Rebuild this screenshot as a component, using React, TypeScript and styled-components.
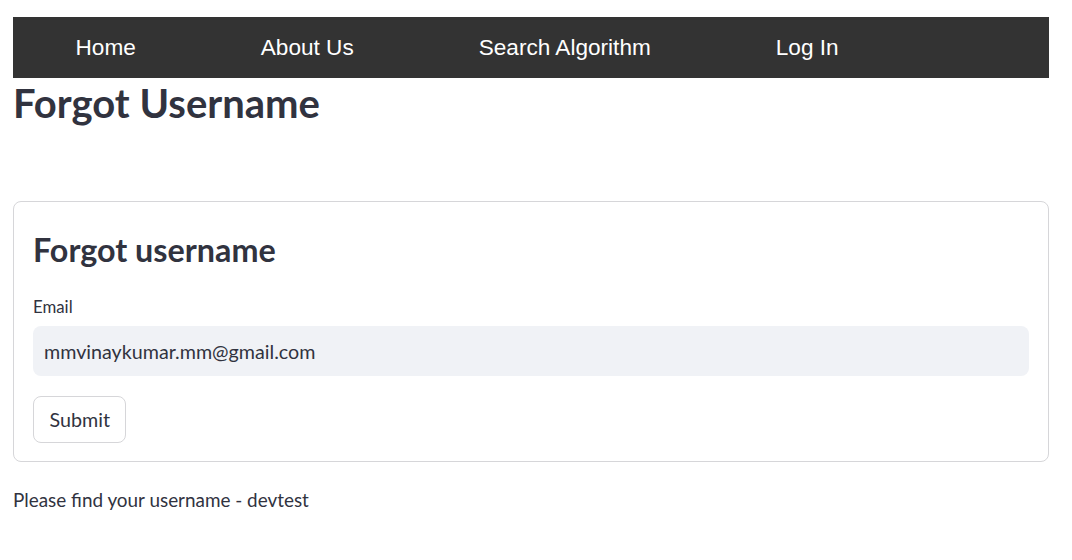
import React from "react";
import styled, { createGlobalStyle } from "styled-components";

const Global = createGlobalStyle`
  html, body { margin: 0; padding: 0; background: #ffffff; }
  body { font-family: "Lato", "Noto Sans", sans-serif; color: #31333f; }
`;

const Page = styled.div`
  width: 1036px;
  padding: 17px 0 0 13px;
  display: flex;
  flex-direction: column;
`;

const NavBar = styled.nav`
  height: 61px;
  background: #333333;
  display: flex;
  align-items: center;
`;

const NavItem = styled.a`
  font-family: "Liberation Sans", Arial, sans-serif;
  font-size: 22.6px;
  color: #ffffff;
  text-decoration: none;
  padding: 0 62.5px;
  line-height: 61px;
`;

const Title = styled.h1`
  margin: 3px 0 0;
  font-size: 40px;
  font-weight: 700;
  line-height: 44px;
  color: #31333f;
`;

const Card = styled.form`
  margin-top: 76px;
  border: 1px solid #d6d6d9;
  border-radius: 8px;
  padding: 27px 19px 18px;
  display: flex;
  flex-direction: column;
  align-items: flex-start;
`;

const CardTitle = styled.h2`
  margin: 0;
  font-size: 32.3px;
  font-weight: 700;
  line-height: 42px;
  color: #31333f;
`;

const Label = styled.label`
  margin-top: 26px;
  font-size: 16.8px;
  line-height: 20px;
  color: #31333f;
`;

const Input = styled.input`
  margin-top: 9px;
  box-sizing: border-box;
  width: 100%;
  height: 50px;
  border: none;
  border-radius: 8px;
  background: #f0f2f6;
  padding: 0 11px;
  font-family: "Lato", "Noto Sans", sans-serif;
  font-size: 19.7px;
  color: #31333f;
  outline: none;
`;

const Button = styled.button`
  margin-top: 20px;
  box-sizing: border-box;
  height: 47px;
  padding: 0 15.5px;
  border: 1px solid #d6d6d9;
  border-radius: 8px;
  background: #ffffff;
  font-family: "Lato", "Noto Sans", sans-serif;
  font-size: 19.7px;
  color: #31333f;
`;

const Message = styled.p`
  margin: 26px 0 0;
  font-size: 18.9px;
  line-height: 24px;
  color: #31333f;
`;

export default function App() {
  return (
    <>
      <Global />
      <Page>
        <NavBar>
          <NavItem href="#">Home</NavItem>
          <NavItem href="#">About Us</NavItem>
          <NavItem href="#">Search Algorithm</NavItem>
          <NavItem href="#">Log In</NavItem>
        </NavBar>
        <Title>Forgot Username</Title>
        <Card onSubmit={(e) => e.preventDefault()}>
          <CardTitle>Forgot username</CardTitle>
          <Label htmlFor="email">Email</Label>
          <Input id="email" type="text" defaultValue="mmvinaykumar.mm@gmail.com" />
          <Button type="submit">Submit</Button>
        </Card>
        <Message>Please find your username - devtest</Message>
      </Page>
    </>
  );
}
